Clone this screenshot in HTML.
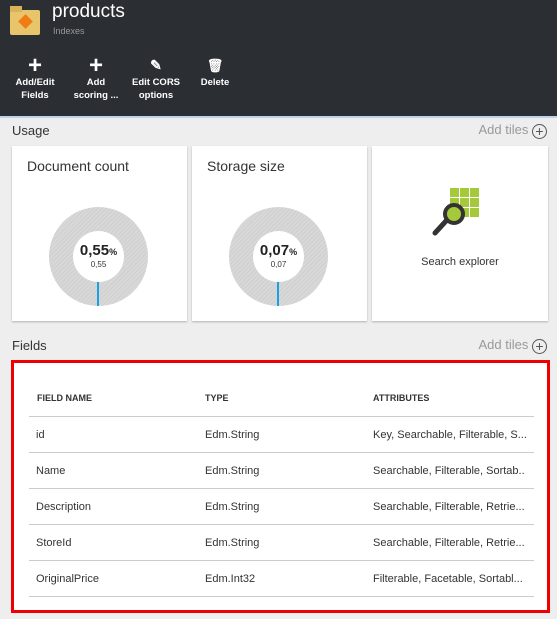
<!DOCTYPE html>
<html><head><style>
*{margin:0;padding:0;box-sizing:border-box}
body{width:557px;height:619px;overflow:hidden;background:#eeeeee;font-family:"Liberation Sans",sans-serif;position:relative}
.hdr{position:absolute;left:0;top:0;width:557px;height:118px;background:#2b2e32;border-bottom:2px solid #bcd3ea}
.abs{position:absolute}
.tb{position:absolute;color:#fff;font-size:9.5px;font-weight:bold;text-align:center;line-height:13px}
.tile{position:absolute;top:146px;height:175px;background:#fff;box-shadow:0 1px 2px rgba(0,0,0,.25);overflow:hidden}
.tt{position:absolute;left:15px;top:12px;font-size:14px;color:#333}
.donut{position:absolute;left:37px;top:61px;width:99px;height:99px;border-radius:50%;background:repeating-linear-gradient(135deg,#d8d8d8 0 2px,#cfcfcf 2px 3px)}
.hole{position:absolute;left:24px;top:24px;width:51px;height:51px;border-radius:50%;background:#fff;text-align:center}
.big{font-size:15px;font-weight:bold;color:#222;margin-top:12px;line-height:16px}
.big span{font-size:9px}
.sm{font-size:8px;color:#333}
.needle{position:absolute;left:48px;top:75px;width:2px;height:24px;background:#1ba1e2}
.sec{position:absolute;left:12px;font-size:13px;color:#333}
.add{position:absolute;right:10px;font-size:13px;color:#999}
.add i{display:inline-block;width:15px;height:15px;border:1px solid #555;border-radius:50%;font-style:normal;text-align:center;line-height:12px;color:#555;font-size:14px;vertical-align:-2px}
.box{position:absolute;left:11px;top:360px;width:539px;height:253px;border:3px solid #e00;background:#fff}
.row{position:absolute;left:15px;width:505px;border-bottom:1px solid #ccc;height:36px;font-size:11px;color:#333}
.row div{position:absolute;top:12px}
</style></head><body>
<div class="hdr">
 <div class="abs" style="left:10px;top:10px;width:30px;height:25px;background:#e8c46a;border-radius:2px"></div>
 <div class="abs" style="left:10px;top:6px;width:12px;height:6px;background:#d9b35a"></div>
 <div class="abs" style="left:19px;top:15px;width:13px;height:13px;background:#f07d14;transform:rotate(45deg) scale(.8)"></div>
 <div class="abs" style="left:52px;top:1px;font-size:19px;color:#fff">products</div>
 <div class="abs" style="left:53px;top:26px;font-size:9px;color:#999">Indexes</div>
 <div class="tb" style="left:12px;top:55px;width:46px"><div style="font-size:24px;line-height:21px">+</div>Add/Edit<br>Fields</div>
 <div class="tb" style="left:73px;top:55px;width:46px"><div style="font-size:24px;line-height:21px">+</div>Add<br>scoring ...</div>
 <div class="tb" style="left:128px;top:55px;width:56px"><div style="font-size:14px;line-height:21px">✎</div>Edit CORS<br>options</div>
 <div class="tb" style="left:195px;top:55px;width:40px"><div style="font-size:13px;line-height:21px">🗑</div>Delete</div>
</div>
<div class="sec" style="top:123px">Usage</div>
<div class="add" style="top:122px">Add tiles <i>+</i></div>
<div class="tile" style="left:12px;width:175px"><div class="tt">Document count</div>
 <div class="donut"><div class="hole"><div class="big">0,55<span>%</span></div><div class="sm">0,55</div></div><div class="needle"></div></div></div>
<div class="tile" style="left:192px;width:175px"><div class="tt">Storage size</div>
 <div class="donut"><div class="hole"><div class="big">0,07<span>%</span></div><div class="sm">0,07</div></div><div class="needle"></div></div></div>
<div class="tile" style="left:372px;width:176px">
 <svg class="abs" style="left:58px;top:42px" width="50" height="52" viewBox="0 0 50 52">
  <g fill="#a4c93a"><rect x="20" y="0" width="9" height="9"/><rect x="30" y="0" width="9" height="9"/><rect x="40" y="0" width="9" height="9"/><rect x="20" y="10" width="9" height="9"/><rect x="30" y="10" width="9" height="9"/><rect x="40" y="10" width="9" height="9"/><rect x="30" y="20" width="9" height="9"/><rect x="40" y="20" width="9" height="9"/></g>
  <line x1="5" y1="45" x2="16" y2="33" stroke="#333" stroke-width="5" stroke-linecap="round"/>
  <circle cx="24" cy="26" r="9" fill="#a4c93a" stroke="#333" stroke-width="4"/>
 </svg>
 <div class="abs" style="left:0;width:176px;top:110px;text-align:center;font-size:11px;color:#333">Search explorer</div></div>
<div class="sec" style="top:338px">Fields</div>
<div class="add" style="top:337px">Add tiles <i>+</i></div>
<div class="box">
 <div class="row" style="top:16px;font-weight:bold;font-size:9px;height:38px"><div style="left:8px;top:14px">FIELD NAME</div><div style="left:176px;top:14px">TYPE</div><div style="left:344px;top:14px">ATTRIBUTES</div></div>
 <div class="row" style="top:54px"><div style="left:7px">id</div><div style="left:176px">Edm.String</div><div style="left:344px">Key, Searchable, Filterable, S...</div></div>
 <div class="row" style="top:90px"><div style="left:7px">Name</div><div style="left:176px">Edm.String</div><div style="left:344px">Searchable, Filterable, Sortab..</div></div>
 <div class="row" style="top:126px"><div style="left:7px">Description</div><div style="left:176px">Edm.String</div><div style="left:344px">Searchable, Filterable, Retrie...</div></div>
 <div class="row" style="top:162px"><div style="left:7px">StoreId</div><div style="left:176px">Edm.String</div><div style="left:344px">Searchable, Filterable, Retrie...</div></div>
 <div class="row" style="top:198px"><div style="left:7px">OriginalPrice</div><div style="left:176px">Edm.Int32</div><div style="left:344px">Filterable, Facetable, Sortabl...</div></div>
</div>
</body></html>
